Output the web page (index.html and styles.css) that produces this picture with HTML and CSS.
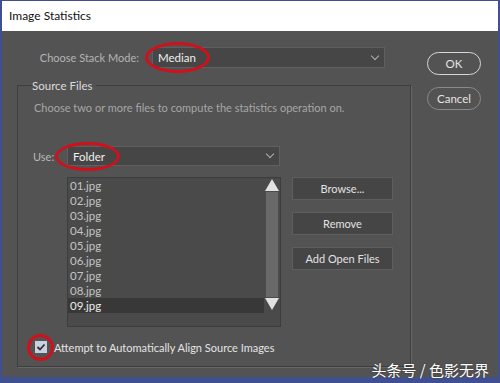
FILE: index.html
```html
<!DOCTYPE html>
<html lang="en">
<head>
  <meta charset="UTF-8" />
  <title>Image Statistics</title>
  <link rel="stylesheet" href="styles.css">
</head>
<body>

<div class="window">
  <div class="titlebar">Image Statistics</div>

  <div class="dialog">
    <div class="main">
      <div class="stack-row">
        <span class="stack-label">Choose Stack Mode:</span>
        <div class="select stack-select">
          <span>Median</span>
          <span class="chevron"></span>
        </div>
      </div>

      <div class="group">
        <div class="legend">Source Files</div>
        <div class="hint">Choose two or more files to compute the statistics operation on.</div>

        <div class="use-row">
          <span class="use-label">Use:</span>
          <div class="select use-select">
            <span>Folder</span>
            <span class="chevron"></span>
          </div>
        </div>

        <div class="files-row">
          <div class="filelist">
            <div class="rows">
              <div class="row">01.jpg</div>
              <div class="row">02.jpg</div>
              <div class="row">03.jpg</div>
              <div class="row">04.jpg</div>
              <div class="row">05.jpg</div>
              <div class="row">06.jpg</div>
              <div class="row">07.jpg</div>
              <div class="row">08.jpg</div>
              <div class="row selected">09.jpg</div>
            </div>
            <div class="scrollbar">
              <div class="arrow up"></div>
              <div class="thumb"></div>
              <div class="arrow down"></div>
            </div>
          </div>
          <div class="file-buttons">
            <div class="btn">Browse...</div>
            <div class="btn">Remove</div>
            <div class="btn">Add Open Files</div>
          </div>
        </div>

        <div class="check-row">
          <span class="checkbox">
            <svg width="12" height="12" viewBox="0 0 12 12"><path d="M2.5 6 L5 8.5 L9.5 3.5" fill="none" stroke="#3a2a30" stroke-width="1.8"/></svg>
          </span>
          <span>Attempt to Automatically Align Source Images</span>
        </div>
      </div>
    </div>

    <div class="side">
      <div class="pill ok">OK</div>
      <div class="pill cancel">Cancel</div>
    </div>

    <!-- red annotation marks -->
    <div class="mark mark-median"></div>
    <div class="mark mark-folder"></div>
    <div class="mark mark-check"></div>
  </div>

  <div class="watermark">头条号 / 色影无界</div>
</div>

</body>
</html>
```

FILE: styles.css
```css
* {
  box-sizing: border-box;
  margin: 0;
  padding: 0;
}

body {
  background: #3f4f8f;
  font-family: Lato, 'Open Sans', sans-serif;
  font-size: 11px;
}

.window {
  position: relative;
  width: 500px;
  height: 383px;
  border-top: 1px solid #3f4f8f;
  border-left: 2px solid #3f4f8f;
  border-right: 2px solid #3f4f8f;
  border-bottom: 6px solid #3f4f8f;
  background: #535353;
}

.titlebar {
  height: 30px;
  background: #fff;
  color: #111;
  font-size: 12px;
  padding-left: 7px;
  line-height: 30px;
}

.dialog {
  position: relative;
  display: flex;
  padding: 16px 0 0 15px;
}

.main {
  width: 394px;
}

.stack-row {
  display: flex;
  align-items: center;
  height: 21px;
}

.stack-label {
  width: 122px;
  text-align: right;
  color: #b4b4b4;
  margin-right: 13px;
}

.select {
  display: flex;
  align-items: center;
  justify-content: space-between;
  height: 21px;
  background: #464646;
  border: 1px solid #5f5f5f;
  color: #f0f0f0;
  font-size: 11.5px;
  padding: 0 6px 0 5px;
}

.stack-select {
  width: 233px;
}

.chevron {
  width: 6px;
  height: 6px;
  border-right: 1px solid #b0b0b0;
  border-bottom: 1px solid #b0b0b0;
  transform: rotate(45deg);
  margin-top: -4px;
}

.group {
  margin-top: 17px;
  height: 282px;
  border: 1px solid #3e3e3e;
  box-shadow: 1px 1px 0 #666;
  padding: 0 0 0 15px;
}

.legend {
  width: max-content;
  margin-top: -9px;
  margin-left: -1px;
  padding: 0 3px 0 0;
  background: #535353;
  color: #dcdcdc;
  font-size: 11.5px;
  line-height: 17px;
}

.hint {
  margin-top: 6px;
  margin-left: 1px;
  line-height: 16px;
  color: #a6a6a6;
}

.use-row {
  display: flex;
  align-items: center;
  margin-top: 30px;
}

.use-label {
  width: 34px;
  color: #b8b8b8;
}

.use-select {
  width: 213px;
  height: 20px;
}

.files-row {
  display: flex;
  margin-top: 11px;
  margin-left: 34px;
}

.filelist {
  display: flex;
  width: 214px;
  height: 150px;
  background: #4a4a4a;
  border: 1px solid #3d3d3d;
}

.rows {
  flex: 1;
}

.row {
  height: 15px;
  line-height: 15px;
  padding-left: 2px;
  color: #c4c4c4;
  font-size: 11.5px;
}

.row.selected {
  background: #383838;
  color: #ececec;
}

.scrollbar {
  width: 16px;
  display: flex;
  flex-direction: column;
  align-items: center;
  height: 133px;
}

.arrow {
  width: 0;
  height: 0;
  border-left: 7px solid transparent;
  border-right: 7px solid transparent;
  margin: 1px 0;
}

.arrow.up {
  border-bottom: 12px solid #e2e2e2;
}

.arrow.down {
  border-top: 12px solid #e2e2e2;
}

.thumb {
  flex: 1;
  width: 12px;
  background: #696969;
}

.file-buttons {
  display: flex;
  flex-direction: column;
  gap: 12px;
  margin-left: 11px;
}

.btn {
  width: 101px;
  height: 23px;
  line-height: 21px;
  text-align: center;
  background: #454545;
  border: 1px solid #5e5e5e;
  color: #e2e2e2;
}

.check-row {
  display: flex;
  align-items: center;
  height: 18px;
  margin-top: 11px;
  margin-left: 2px;
  color: #e4e4e4;
}

.checkbox {
  display: flex;
  align-items: center;
  justify-content: center;
  width: 12px;
  height: 12px;
  background: #c9d1e1;
  margin-right: 7px;
}

.side {
  display: flex;
  flex-direction: column;
  gap: 12px;
  margin-left: 16px;
  margin-top: 5px;
}

.pill {
  width: 54px;
  height: 23px;
  border-radius: 12px;
  text-align: center;
  line-height: 21px;
  color: #e4e4e4;
  font-size: 11.5px;
}

.pill.ok {
  border: 1px solid #d8d8d8;
}

.pill.cancel {
  border: 1px solid #8a8a8a;
}

.mark {
  position: absolute;
  border: 3px solid #d0101c;
  border-radius: 50%;
}

.mark-median {
  left: 143px;
  top: 11px;
  width: 65px;
  height: 31px;
}

.mark-folder {
  left: 53px;
  top: 111px;
  width: 65px;
  height: 29px;
}

.mark-check {
  left: 25px;
  top: 303px;
  width: 27px;
  height: 27px;
}

.watermark {
  position: absolute;
  right: 9px;
  bottom: -3px;
  color: #fff;
  font-family: 'Noto Sans CJK SC', sans-serif;
  font-size: 15px;
  text-shadow: 0 0 2px rgba(0, 0, 0, 0.4);
}
```
